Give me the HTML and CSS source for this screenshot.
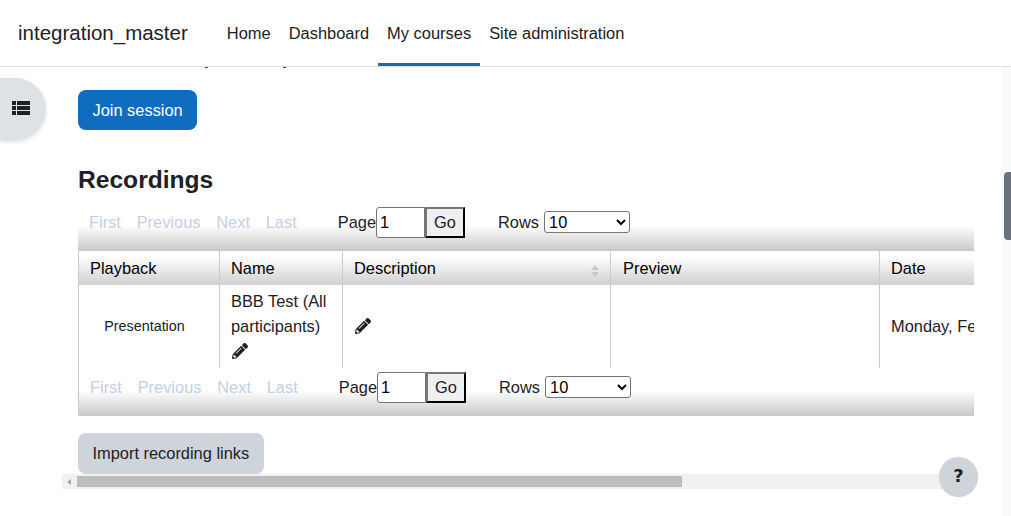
FILE: index.html
```html
<!DOCTYPE html>
<html lang="en">
<head>
<meta charset="utf-8">
<title>integration_master</title>
<link rel="stylesheet" href="styles.css">
</head>
<body>
<header class="navbar">
  <span class="brand">integration_master</span>
  <nav class="nav">
    <a class="nav-link">Home</a>
    <a class="nav-link">Dashboard</a>
    <a class="nav-link active">My courses</a>
    <a class="nav-link">Site administration</a>
  </nav>
</header>
<div class="page">
  <main class="region">
    <div class="drawer-toggle">
      <svg class="icon-list" viewBox="0 0 18 14"><path d="M0 0h4v4H0zM5 0h13v4H5zM0 5h4v4H0zM5 5h13v4H5zM0 10h4v4H0zM5 10h13v4H5z"/></svg>
    </div>
    <div class="content">
      <div class="inner">
        <p class="intro">This room is ready. Enter any time.</p>
        <button class="btn btn-primary">Join session</button>
        <h3 class="heading">Recordings</h3>
        <div class="datatable">
          <div class="pager pager-top">
            <a class="pg-link">First</a>
            <a class="pg-link">Previous</a>
            <a class="pg-link">Next</a>
            <a class="pg-link pg-last">Last</a>
            <span class="pg-label">Page</span>
            <input class="pg-input" value="1">
            <button class="pg-go">Go</button>
            <span class="pg-rows">Rows</span>
            <select class="pg-select"><option>10</option></select>
          </div>
          <div class="table-clip">
            <table class="rec-table">
              <colgroup>
                <col class="c1"><col class="c2"><col class="c3"><col class="c4"><col class="c5">
              </colgroup>
              <thead>
                <tr>
                  <th>Playback</th>
                  <th>Name</th>
                  <th class="sortable">Description
                    <svg class="sort" viewBox="0 0 8 12"><path d="M4 0l4 5H0zM4 12L0 7h8z"/></svg>
                  </th>
                  <th class="th-preview">Preview</th>
                  <th>Date</th>
                </tr>
              </thead>
              <tbody>
                <tr>
                  <td class="playback">Presentation</td>
                  <td>BBB Test (All participants)<br>
                    <svg class="icon-pencil" viewBox="0 0 512 512"><path d="M497.9 142.1l-46.1 46.1c-4.7 4.7-12.3 4.7-17 0l-111-111c-4.7-4.7-4.7-12.3 0-17l46.1-46.1c18.7-18.7 49.1-18.7 67.9 0l60.1 60.1c18.8 18.7 18.8 49.1 0 67.9zM284.2 99.8L21.6 362.4.4 483.9c-2.9 16.4 11.4 30.6 27.8 27.8l121.5-21.3 262.6-262.6c4.7-4.7 4.7-12.3 0-17l-111-111c-4.8-4.7-12.4-4.7-17.1 0zM124.1 339.9c-5.5-5.5-5.5-14.3 0-19.8l154-154c5.5-5.5 14.3-5.5 19.8 0s5.5 14.3 0 19.8l-154 154c-5.5 5.5-14.3 5.5-19.8 0zM88 424h48v36.3l-64.5 11.3-31.1-31.1L51.7 376H88v48z"/></svg>
                  </td>
                  <td>
                    <svg class="icon-pencil" viewBox="0 0 512 512"><path d="M497.9 142.1l-46.1 46.1c-4.7 4.7-12.3 4.7-17 0l-111-111c-4.7-4.7-4.7-12.3 0-17l46.1-46.1c18.7-18.7 49.1-18.7 67.9 0l60.1 60.1c18.8 18.7 18.8 49.1 0 67.9zM284.2 99.8L21.6 362.4.4 483.9c-2.9 16.4 11.4 30.6 27.8 27.8l121.5-21.3 262.6-262.6c4.7-4.7 4.7-12.3 0-17l-111-111c-4.8-4.7-12.4-4.7-17.1 0zM124.1 339.9c-5.5-5.5-5.5-14.3 0-19.8l154-154c5.5-5.5 14.3-5.5 19.8 0s5.5 14.3 0 19.8l-154 154c-5.5 5.5-14.3 5.5-19.8 0zM88 424h48v36.3l-64.5 11.3-31.1-31.1L51.7 376H88v48z"/></svg>
                  </td>
                  <td></td>
                  <td class="nowrap">Monday, February 2025</td>
                </tr>
              </tbody>
            </table>
          </div>
          <div class="pager pager-bottom">
            <a class="pg-link">First</a>
            <a class="pg-link">Previous</a>
            <a class="pg-link">Next</a>
            <a class="pg-link pg-last">Last</a>
            <span class="pg-label">Page</span>
            <input class="pg-input" value="1">
            <button class="pg-go">Go</button>
            <span class="pg-rows">Rows</span>
            <select class="pg-select"><option>10</option></select>
          </div>
        </div>
        <button class="btn btn-secondary">Import recording links</button>
      </div>
      <div class="hscroll">
        <span class="hscroll-arrow"></span>
        <span class="hscroll-thumb"></span>
      </div>
    </div>
    <div class="help">?</div>
  </main>
  <div class="rail"><span class="rail-thumb"></span></div>
</div>
</body>
</html>
```
FILE: styles.css
```css
* { box-sizing: border-box; }
html, body { margin: 0; height: 516px; overflow: hidden; }
body {
  display: flex;
  flex-direction: column;
  background: #fff;
  color: #1d2125;
  font-family: "Liberation Sans", Arial, sans-serif;
  font-size: 16.4px;
  line-height: 24.6px;
}
.navbar {
  position: relative;
  z-index: 2;
  flex: none;
  height: 67px;
  display: flex;
  align-items: stretch;
  background: #fff;
  border-bottom: 1px solid #dee2e6;
  padding-left: 18px;
}
.brand { font-size: 20.5px; line-height: 66px; margin-right: 30px; }
.nav { display: flex; }
.nav-link {
  padding: 0 9px;
  font-size: 16.44px;
  line-height: 66px;
  height: 66px;
  border-bottom: 3px solid transparent;
}
.nav-link.active { border-bottom-color: #0f6cbf; }
.page { flex: 1; display: flex; min-height: 0; }
.region { position: relative; flex: 1; min-width: 0; }
.rail { flex: none; width: 9px; background: #f8f9fa; padding: 105px 0 0 2px; }
.rail-thumb { display: block; width: 7px; height: 68px; background: #6a737b; border-radius: 4px 0 0 4px; }
.drawer-toggle {
  position: absolute;
  left: 0;
  top: 11px;
  width: 46px;
  height: 62px;
  background: #dee2e6;
  border-radius: 0 31px 31px 0;
  box-shadow: 0 2px 4px rgba(0,0,0,.12);
  display: flex;
  align-items: center;
  justify-content: center;
}
.icon-list { width: 18px; height: 14px; fill: #1d2125; margin: 0 5px 3px 0; }
.content { margin-left: 62px; width: 912px; }
.inner { padding-left: 16px; }
.intro { margin: -19.6px 0 18px; white-space: nowrap; }
.btn {
  display: block;
  font: inherit;
  border: 1px solid transparent;
  border-radius: 8px;
  padding: 0 13.5px;
}
.btn-primary { height: 40px; background: #0f6cbf; color: #fff; }
.btn-secondary { height: 41px; background: #ced4da; color: #1d2125; margin-top: 17px; }
.heading { margin: 35px 0 11px; font-size: 24.6px; line-height: 29px; font-weight: 700; }
.datatable { color: #000; }
.pager {
  display: flex;
  align-items: flex-start;
  padding-left: 11px;
  background: linear-gradient(#fff, #c9c9c9) left bottom / 100% 26px no-repeat;
  line-height: 31px;
}
.pager-top { height: 46px; padding-top: 2px; }
.pager-bottom { height: 48px; padding-top: 4px; border-left: 1px solid #cbcbcb; }
.pg-link { color: #c5d0e6; margin-right: 15.8px; }
.pg-last { margin-right: 41px; }
.pg-label { color: #1d2125; }
.pg-input {
  width: 49px;
  height: 31px;
  font: inherit;
  line-height: normal;
  padding: 1px 3px;
  color: #000;
  background: #fff;
  border: 1px solid #767676;
  border-radius: 3px 0 0 3px;
}
.pg-go {
  width: 40px;
  height: 31px;
  font: inherit;
  line-height: normal;
  color: #1d2125;
  padding: 0;
  background: #efefef;
  border: 2px outset #3b3b3b;
  border-color: #767676 #2b2b2b #2b2b2b #767676;
  margin-right: 33px;
}
.pg-rows { color: #1d2125; margin-right: 4px; width: 42px; }
.pg-select {
  width: 86px;
  height: 22px;
  margin-top: 4px;
  font: inherit;
  line-height: normal;
  color: #000;
  background: #fff;
  border: 1px solid #767676;
  border-radius: 3px;
  padding: 0;
}
.table-clip { overflow: hidden; height: 117px; }
.rec-table {
  table-layout: fixed;
  border-collapse: separate;
  border-spacing: 0;
  width: 1200px;
  border-left: 1px solid #cbcbcb;
}
.c1 { width: 141px; }
.c2 { width: 123px; }
.c3 { width: 268px; }
.c4 { width: 269px; }
.c5 { width: 398px; }
.rec-table th {
  position: relative;
  height: 34px;
  padding: 0 11px;
  font-weight: 400;
  text-align: left;
  background: linear-gradient(#fff 15%, #d0d0d0);
  border-right: 1px solid #cbcbcb;
}
.rec-table th.th-preview { padding-left: 12px; }
.rec-table th:last-child, .rec-table td:last-child { border-right: 0; }
.rec-table td {
  height: 83px;
  padding: 4px 11px;
  line-height: 25px;
  color: #1d2125;
  border-right: 1px solid #cbcbcb;
  vertical-align: middle;
}
.rec-table td.playback { font-size: 14.35px; text-align: center; padding: 0 20px 0 11px; }
.nowrap { white-space: nowrap; }
.sort { position: absolute; right: 11px; top: 14px; width: 8px; height: 12px; fill: #c8c8c8; }
.icon-pencil { display: inline-block; width: 16px; height: 16px; margin-left: 1px; fill: #1d2125; vertical-align: -2px; }
.hscroll {
  display: flex;
  align-items: center;
  height: 15px;
  background: #f1f1f1;
}
.hscroll-arrow {
  width: 0;
  height: 0;
  border-style: solid;
  border-color: transparent #a3a3a3 transparent transparent;
  border-width: 3.5px 4px 3.5px 0;
  margin-left: 5px;
  margin-right: 6px;
}
.hscroll-thumb { width: 605px; height: 11px; background: #bdbdbd; }
.help {
  position: absolute;
  left: 939px;
  top: 390px;
  width: 39px;
  height: 40px;
  border-radius: 50%;
  background: #ced4da;
  box-shadow: 0 0 2px rgba(0,0,0,.05);
  text-align: center;
  font-family: "DejaVu Sans", sans-serif;
  font-weight: 700;
  font-size: 18px;
  line-height: 38px;
}
```
